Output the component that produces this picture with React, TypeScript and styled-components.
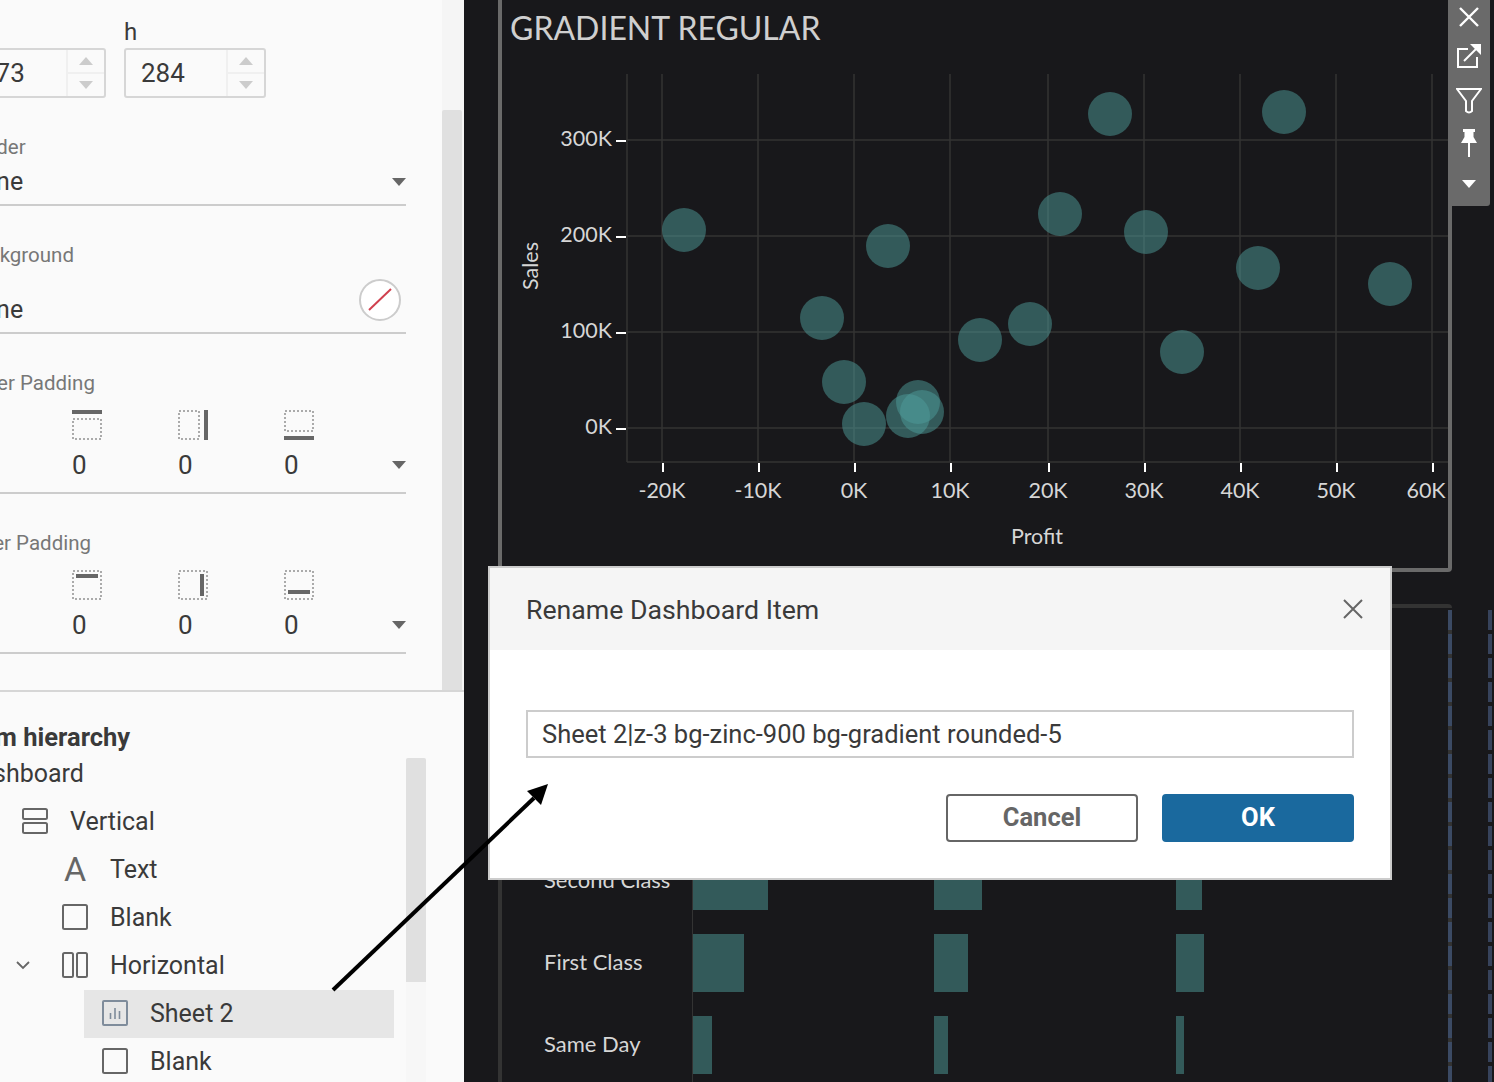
import React from 'react'
import styled, { createGlobalStyle } from 'styled-components'

const GlobalStyle = createGlobalStyle`
  html, body {
    margin: 0;
    padding: 0;
    background: #18181b;
    overflow: hidden;
  }
  * { box-sizing: border-box; }
`

const PANEL_FONT = `Roboto, "Liberation Sans", sans-serif`
const CHART_FONT = `Lato, "Liberation Sans", sans-serif`

const Page = styled.div`
  position: relative;
  display: flex;
  width: 1494px;
  height: 1082px;
  overflow: hidden;
  background: #18181b;
`

/* ---------- left sidebar ---------- */

const Sidebar = styled.aside`
  display: flex;
  flex-direction: column;
  flex: none;
  width: 464px;
  height: 100%;
  background: #fafafa;
  color: #3a3a3a;
  font-family: ${PANEL_FONT};
  overflow: hidden;
`

const TopPanel = styled.section`
  display: flex;
  flex: none;
  height: 692px;
  border-bottom: 2px solid #d6d6d6;
`

const Form = styled.div`
  flex: none;
  width: 442px;
  margin-left: -36px;
  padding-top: 18px;
`

const ScrollTrack = styled.div`
  flex: none;
  width: 22px;
  margin-left: 36px;
  background: #f5f5f5;
`

const ScrollThumb = styled.div<{ $top: number; $height: number }>`
  width: 20px;
  height: ${(p) => p.$height}px;
  margin-top: ${(p) => p.$top}px;
  background: #e0e0e0;
  border-radius: 2px 2px 0 0;
`

const DimRow = styled.div`
  display: flex;
  gap: 18px;
`

const DimField = styled.div`
  width: 142px;
`

const DimLabel = styled.div`
  height: 28px;
  margin-bottom: 2px;
  font-size: 24px;
  line-height: 28px;
`

const NumberBox = styled.div`
  display: flex;
  justify-content: space-between;
  align-items: center;
  height: 50px;
  padding-left: 15px;
  border: 2px solid #d6d6d6;
  border-radius: 3px;
  font-size: 26px;
`

const Stepper = styled.div`
  display: flex;
  flex-direction: column;
  width: 38px;
  height: 100%;
  border-left: 2px solid #f0f0f0;
`

const StepButton = styled.div`
  display: flex;
  flex: 1;
  align-items: center;
  justify-content: center;
  &:first-child {
    border-bottom: 2px solid #f0f0f0;
  }
`

const Triangle = styled.span<{ $up?: boolean; $color: string }>`
  display: block;
  width: 0;
  height: 0;
  border-left: 7px solid transparent;
  border-right: 7px solid transparent;
  ${(p) => (p.$up ? 'border-bottom' : 'border-top')}: 8px solid ${(p) => p.$color};
`

const FieldLabel = styled.div`
  height: 24px;
  margin-top: 37px;
  padding-left: 1px;
  color: #777;
  font-size: 20.5px;
  line-height: 24px;
`

const SelectRow = styled.div`
  display: flex;
  align-items: center;
  justify-content: space-between;
  height: 47px;
  border-bottom: 2px solid #ccc;
  font-size: 25px;
`

const SwatchRow = styled.div`
  display: flex;
  align-items: center;
  justify-content: space-between;
  height: 67px;
  padding-right: 5px;
  border-bottom: 2px solid #ccc;
  font-size: 25px;
`

const SwatchText = styled.span`
  margin-top: 20px;
`

const PaddingRow = styled.div`
  display: flex;
  justify-content: space-between;
  height: 99px;
  padding: 15px 0 0 2px;
  border-bottom: 2px solid #ccc;
`

const PaddingGrid = styled.div`
  display: grid;
  grid-template-columns: repeat(4, 106px);
`

const PaddingCell = styled.div`
  display: flex;
  flex-direction: column;
  gap: 10px;
  font-size: 26px;
  line-height: 30px;
`

const CaretSlot = styled.div`
  align-self: flex-end;
  margin-bottom: 23px;
`

const BottomPanel = styled.section`
  flex: 1;
  padding-top: 33px;
  min-height: 0;
`

const Heading = styled.div`
  height: 24px;
  margin-left: -35px;
  font-size: 25.5px;
  font-weight: 700;
  line-height: 24px;
  white-space: nowrap;
`

const TreeArea = styled.div`
  display: flex;
  align-items: flex-start;
`

const TreeList = styled.div`
  flex: none;
  width: 406px;
  padding-right: 12px;
`

const TreeScroll = styled.div`
  flex: none;
  width: 20px;
  height: 324px;
  margin-top: 9px;
  background: #f7f7f7;
`

const TreeRow = styled.div<{ $indent: number; $selected?: boolean }>`
  display: flex;
  align-items: center;
  height: 48px;
  margin-left: ${(p) => (p.$selected ? 84 : 0)}px;
  padding-left: ${(p) => (p.$selected ? p.$indent - 84 : p.$indent)}px;
  background: ${(p) => (p.$selected ? '#e6e6e6' : 'transparent')};
  font-size: 25px;
  white-space: nowrap;
  ${(p) => p.$selected && 'margin-top: 1px; margin-bottom: -1px; padding-bottom: 2px;'}
`

const RootRow = styled(TreeRow)`
  margin-left: -37px;
`

const TreeIcon = styled.svg`
  flex: none;
  width: 26px;
  height: 26px;
  margin-right: 22px;
`

const TextGlyph = styled.span`
  flex: none;
  width: 26px;
  margin-right: 22px;
  color: #666;
  font-size: 34px;
  line-height: 34px;
  text-align: center;
`

const Chevron = styled.svg`
  flex: none;
  width: 14px;
  height: 10px;
  margin-right: 32px;
`

/* ---------- dark canvas ---------- */

const Canvas = styled.main`
  display: flex;
  flex: 1;
  gap: 36px;
  padding-left: 34px;
  font-family: ${CHART_FONT};
  color: #d4d4d4;
`

const CanvasColumn = styled.div`
  flex: none;
  width: 954px;
`

const ChartFrame = styled.div`
  height: 576px;
  margin-top: -4px;
  border: 4px solid #6a6a6a;
  border-radius: 4px;
`

const ChartTitle = styled.h2`
  margin: 0;
  padding: 6px 0 0 8px;
  height: 48px;
  color: #cfcfcf;
  font-size: 32px;
  font-weight: 400;
  line-height: 44px;
  white-space: nowrap;
`

const ChartSvg = styled.svg`
  display: block;
  margin-top: -48px;
  overflow: visible;
`

const AxisText = styled.text`
  fill: #d6d6d6;
  font-family: ${CHART_FONT};
  font-size: 21.5px;
`

const BarFrame = styled.div`
  position: relative;
  height: 700px;
  margin-top: 32px;
  padding: 244px 0 0 0;
  border-top: 4px solid #333;
  border-left: 4px solid #333;
  border-radius: 4px 4px 0 0;

  &::after {
    content: '';
    position: absolute;
    top: 2px;
    right: 0;
    bottom: 0;
    width: 4px;
    background: repeating-linear-gradient(to bottom, #3b4a64 0 20px, #333 20px 24px);
  }
`

const BarRow = styled.div`
  display: grid;
  grid-template-columns: 191px 241px 242px 1fr;
  height: 82px;
`

const BarLabel = styled.div`
  padding: 0 0 24px 42px;
  color: #d6d6d6;
  font-size: 22px;
  line-height: 56px;
  white-space: nowrap;
  border-right: 1px solid #333;
  margin-bottom: -24px;
`

const Bar = styled.div<{ $width: number }>`
  width: ${(p) => p.$width}px;
  height: 58px;
  background: #335a5a;
`

const DashedRail = styled.div`
  flex: none;
  width: 4px;
  height: 480px;
  margin-top: 610px;
  background: repeating-linear-gradient(to bottom, #37435c 0 20px, transparent 20px 24px);
`

const Toolbar = styled.div`
  position: absolute;
  top: 0;
  left: 1448px;
  display: flex;
  flex-direction: column;
  align-items: center;
  width: 42px;
  height: 206px;
  padding-top: 7px;
  background: #6a6a6a;
  border-bottom-right-radius: 3px;
`

const ToolIcon = styled.svg<{ $gap: number }>`
  display: block;
  flex: none;
  margin-top: ${(p) => p.$gap}px;
`

/* ---------- dialog ---------- */

const Dialog = styled.div`
  position: absolute;
  top: 566px;
  left: 488px;
  width: 904px;
  height: 314px;
  background: #fff;
  border: 2px solid #ccc;
  color: #3a3a3a;
  font-family: ${PANEL_FONT};
`

const DialogHeader = styled.header`
  display: flex;
  align-items: center;
  justify-content: space-between;
  height: 82px;
  padding: 2px 27px 0 36px;
  background: #f5f5f5;
  font-size: 26.7px;

  svg {
    margin-top: -2px;
  }
`

const DialogBody = styled.div`
  padding: 60px 36px 0;
`

const TextBox = styled.div`
  height: 48px;
  padding-left: 14px;
  border: 2px solid #ccc;
  font-size: 25.5px;
  line-height: 44px;
  white-space: nowrap;
`

const DialogFooter = styled.div`
  display: flex;
  justify-content: flex-end;
  gap: 24px;
  margin-top: 36px;
`

const Button = styled.button<{ $primary?: boolean }>`
  width: 192px;
  height: 48px;
  padding: 0 0 2px;
  border: 2px solid ${(p) => (p.$primary ? '#1a699e' : '#666')};
  border-radius: 4px;
  background: ${(p) => (p.$primary ? '#1a699e' : '#fff')};
  color: ${(p) => (p.$primary ? '#fff' : '#666')};
  font-family: ${PANEL_FONT};
  font-size: 25.5px;
  font-weight: 700;
`

const ArrowOverlay = styled.svg`
  position: absolute;
  inset: 0;
  pointer-events: none;
`

/* ---------- icons ---------- */

type Side = 'top' | 'right' | 'bottom' | 'left'

const PaddingIcon = ({ side, inner }: { side: Side; inner?: boolean }) => {
  const bar = inner
    ? { top: [4, 6, 26, 6], right: [24, 4, 24, 26], bottom: [4, 22, 26, 22], left: [6, 4, 6, 26] }[side]
    : { top: [0, 2, 30, 2], right: [28, 0, 28, 30], bottom: [0, 28, 30, 28], left: [2, 0, 2, 30] }[side]
  const box = inner
    ? { x: 1, y: 1, w: 28, h: 28 }
    : {
        top: { x: 1, y: 9, w: 28, h: 20 },
        right: { x: 1, y: 1, w: 20, h: 28 },
        bottom: { x: 1, y: 1, w: 28, h: 20 },
        left: { x: 9, y: 1, w: 20, h: 28 },
      }[side]
  return (
    <svg width="30" height="30" viewBox="0 0 30 30">
      <rect x={box.x} y={box.y} width={box.w} height={box.h} fill="none" stroke="#aaa" strokeWidth="2" strokeDasharray="2 2" />
      <line x1={bar[0]} y1={bar[1]} x2={bar[2]} y2={bar[3]} stroke="#666" strokeWidth="4" />
    </svg>
  )
}

const PaddingFields = ({ inner }: { inner?: boolean }) => (
  <PaddingRow>
    <PaddingGrid>
      {(['left', 'top', 'right', 'bottom'] as Side[]).map((side) => (
        <PaddingCell key={side}>
          <PaddingIcon side={side} inner={inner} />
          <span>0</span>
        </PaddingCell>
      ))}
    </PaddingGrid>
    <CaretSlot>
      <Triangle $color="#666" />
    </CaretSlot>
  </PaddingRow>
)

const NumberField = ({ label, value }: { label: string; value: string }) => (
  <DimField>
    <DimLabel>{label}</DimLabel>
    <NumberBox>
      {value}
      <Stepper>
        <StepButton>
          <Triangle $up $color="#ccc" />
        </StepButton>
        <StepButton>
          <Triangle $color="#ccc" />
        </StepButton>
      </Stepper>
    </NumberBox>
  </DimField>
)

const VerticalIcon = () => (
  <TreeIcon viewBox="0 0 26 26" fill="none" stroke="#666" strokeWidth="2">
    <rect x="1" y="1" width="24" height="10" rx="1.5" />
    <rect x="1" y="15" width="24" height="10" rx="1.5" />
  </TreeIcon>
)

const HorizontalIcon = () => (
  <TreeIcon viewBox="0 0 26 26" fill="none" stroke="#666" strokeWidth="2">
    <rect x="1" y="1" width="10" height="24" rx="1.5" />
    <rect x="15" y="1" width="10" height="24" rx="1.5" />
  </TreeIcon>
)

const BlankIcon = () => (
  <TreeIcon viewBox="0 0 26 26" fill="none" stroke="#666" strokeWidth="2">
    <rect x="1" y="1" width="24" height="24" rx="1.5" />
  </TreeIcon>
)

const SheetIcon = () => (
  <TreeIcon viewBox="0 0 26 26" fill="none" stroke="#7f8c9b" strokeWidth="2">
    <rect x="1" y="1" width="24" height="24" rx="1" />
    <path d="M8.500 19v-6M13 19V8M17.500 19v-8" strokeWidth="1.6" />
  </TreeIcon>
)

/* ---------- chart data ---------- */

const X_GRID = [662, 758, 854, 950, 1048, 1144, 1240, 1336, 1432]
const X_LABELS = ['-20K', '-10K', '0K', '10K', '20K', '30K', '40K', '50K', '60K']
const Y_GRID = [140, 236, 332, 428]
const Y_LABELS = ['300K', '200K', '100K', '0K']
const DOTS = [
  [684, 230], [888, 246], [822, 318], [844, 382], [864, 424], [908, 416], [918, 402], [922, 412],
  [980, 340], [1030, 324], [1060, 214], [1110, 114], [1146, 232], [1182, 352], [1258, 268],
  [1284, 112], [1390, 284],
]

const BARS: [string, number[]][] = [
  ['Second Class', [75, 48, 26]],
  ['First Class', [51, 34, 28]],
  ['Same Day', [19, 14, 8]],
]

const ScatterChart = () => (
  <ChartSvg width="946" height="566" viewBox="502 0 946 566">
    <g stroke="#333" strokeWidth="1.5">
      <line x1="627" y1="74" x2="627" y2="462" />
      {X_GRID.map((x) => (
        <line key={x} x1={x} y1="74" x2={x} y2="462" />
      ))}
      {Y_GRID.map((y) => (
        <line key={y} x1="627" y1={y} x2="1448" y2={y} />
      ))}
      <line x1="627" y1="462" x2="1448" y2="462" />
    </g>
    <g stroke="#fff" strokeWidth="2">
      {Y_GRID.map((y) => (
        <line key={y} x1="616" y1={y + 1} x2="626" y2={y + 1} />
      ))}
      {X_GRID.map((x) => (
        <line key={x} x1={x + 1} y1="463" x2={x + 1} y2="472" />
      ))}
    </g>
    {DOTS.map(([cx, cy]) => (
      <circle key={`${cx}-${cy}`} cx={cx} cy={cy} r="22" fill="rgb(78,156,153)" fillOpacity="0.5" />
    ))}
    {Y_LABELS.map((label, i) => (
      <AxisText key={label} x="612" y={Y_GRID[i] + 6} textAnchor="end">
        {label}
      </AxisText>
    ))}
    {X_LABELS.map((label, i) => (
      <AxisText key={label} x={i === 8 ? 1426 : X_GRID[i]} y="498" textAnchor="middle">
        {label}
      </AxisText>
    ))}
    <AxisText x="1037" y="544" textAnchor="middle">
      Profit
    </AxisText>
    <AxisText x="538" y="266" textAnchor="middle" transform="rotate(-90 538 266)">
      Sales
    </AxisText>
  </ChartSvg>
)

export default function App() {
  return (
    <>
      <GlobalStyle />
      <Page>
        <Sidebar>
          <TopPanel>
            <Form>
              <DimRow>
                <NumberField label="w" value="173" />
                <NumberField label="h" value="284" />
              </DimRow>

              <FieldLabel>Border</FieldLabel>
              <SelectRow>
                None
                <Triangle $color="#666" />
              </SelectRow>

              <FieldLabel>Background</FieldLabel>
              <SwatchRow>
                <SwatchText>None</SwatchText>
                <svg width="42" height="42" viewBox="0 0 42 42">
                  <circle cx="21" cy="21" r="20" fill="#fff" stroke="#ccc" strokeWidth="2" />
                  <line x1="10" y1="31" x2="32" y2="10" stroke="#d0404e" strokeWidth="2" />
                </svg>
              </SwatchRow>

              <FieldLabel>Outer Padding</FieldLabel>
              <PaddingFields />

              <FieldLabel>Inner Padding</FieldLabel>
              <PaddingFields inner />
            </Form>
            <ScrollTrack>
              <ScrollThumb $top={110} $height={580} />
            </ScrollTrack>
          </TopPanel>

          <BottomPanel>
            <Heading>Item hierarchy</Heading>
            <TreeArea>
              <TreeList>
                <RootRow $indent={0}>Dashboard</RootRow>
                <TreeRow $indent={22}>
                  <VerticalIcon />
                  Vertical
                </TreeRow>
                <TreeRow $indent={62}>
                  <TextGlyph>A</TextGlyph>
                  Text
                </TreeRow>
                <TreeRow $indent={62}>
                  <BlankIcon />
                  Blank
                </TreeRow>
                <TreeRow $indent={16}>
                  <Chevron viewBox="0 0 14 10" fill="none" stroke="#666" strokeWidth="1.8">
                    <path d="M1 2l6 6 6-6" />
                  </Chevron>
                  <HorizontalIcon />
                  Horizontal
                </TreeRow>
                <TreeRow $indent={102} $selected>
                  <SheetIcon />
                  Sheet 2
                </TreeRow>
                <TreeRow $indent={102}>
                  <BlankIcon />
                  Blank
                </TreeRow>
              </TreeList>
              <TreeScroll>
                <ScrollThumb $top={0} $height={224} />
              </TreeScroll>
            </TreeArea>
          </BottomPanel>
        </Sidebar>

        <Canvas>
          <CanvasColumn>
            <ChartFrame>
              <ChartTitle>GRADIENT REGULAR</ChartTitle>
              <ScatterChart />
            </ChartFrame>
            <BarFrame>
              {BARS.map(([label, widths]) => (
                <BarRow key={label}>
                  <BarLabel>{label}</BarLabel>
                  {widths.map((w, i) => (
                    <Bar key={i} $width={w} />
                  ))}
                </BarRow>
              ))}
            </BarFrame>
          </CanvasColumn>
          <DashedRail />
        </Canvas>

        <Toolbar>
          <ToolIcon $gap={0} width="20" height="20" viewBox="0 0 20 20" stroke="#fff" strokeWidth="2.4">
            <path d="M1 1l18 18M19 1L1 19" />
          </ToolIcon>
          <ToolIcon $gap={17} width="24" height="24" viewBox="0 0 24 24" fill="none" stroke="#fff" strokeWidth="2">
            <path d="M11 5H1v18h19V13" />
            <path d="M7 17L20 4" />
            <path d="M13 0h11v11z" fill="#fff" stroke="none" />
          </ToolIcon>
          <ToolIcon $gap={20} width="26" height="26" viewBox="0 0 26 26" fill="none" stroke="#fff" strokeWidth="2">
            <path d="M1 1h24l-9 12v10q-3 3-6 0V13z" />
          </ToolIcon>
          <ToolIcon $gap={15} width="16" height="28" viewBox="0 0 16 28" fill="#fff">
            <path d="M2 0h12v3h-1.500v5l3.500 6H9v14H7V14H0l3.500-6V3H2z" />
          </ToolIcon>
          <ToolIcon $gap={23} width="14" height="8" viewBox="0 0 14 8" fill="#fff">
            <path d="M0 0h14L7 8z" />
          </ToolIcon>
        </Toolbar>

        <Dialog>
          <DialogHeader>
            Rename Dashboard Item
            <svg width="20" height="20" viewBox="0 0 20 20" stroke="#666" strokeWidth="2">
              <path d="M1 1l18 18M19 1L1 19" />
            </svg>
          </DialogHeader>
          <DialogBody>
            <TextBox>Sheet 2|z-3 bg-zinc-900 bg-gradient rounded-5</TextBox>
            <DialogFooter>
              <Button>Cancel</Button>
              <Button $primary>OK</Button>
            </DialogFooter>
          </DialogBody>
        </Dialog>

        <ArrowOverlay width="1494" height="1082" viewBox="0 0 1494 1082">
          <line x1="333" y1="990" x2="534" y2="798" stroke="#000" strokeWidth="4" />
          <path d="M548 784l-21 7 7 7 7 7z" fill="#000" />
        </ArrowOverlay>
      </Page>
    </>
  )
}
